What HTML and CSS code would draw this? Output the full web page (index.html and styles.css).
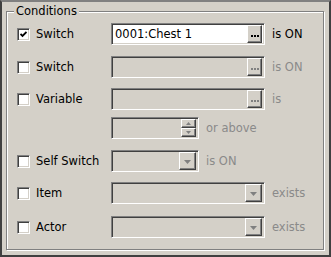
FILE: index.html
```html
<!DOCTYPE html>
<html lang="en">
  <head>
    <meta charset="UTF-8" />
    <title>Conditions</title>
    <link rel="stylesheet" href="styles.css">
  </head>
  <body>
    <div class="window">
      <div class="group">
        <span class="legend">Conditions</span>

        <div class="row">
          <span class="opt"><span class="check"><svg width="7" height="7" viewBox="0 0 7 7"><polyline points="0.5,3 2.5,5 6.5,1" fill="none" stroke="#000" stroke-width="1.8"/></svg></span>Switch</span>
          <div class="field wide on">
            <span class="value">0001:Chest 1</span>
            <span class="btn"><svg width="8" height="2" viewBox="0 0 8 2"><rect x="0" y="0" width="2" height="2"/><rect x="3" y="0" width="2" height="2"/><rect x="6" y="0" width="2" height="2"/></svg></span>
          </div>
          <span class="suffix">is ON</span>
        </div>

        <div class="row r2">
          <span class="opt"><span class="check"></span>Switch</span>
          <div class="field wide">
            <span class="btn off"><svg width="8" height="2" viewBox="0 0 8 2"><rect x="0" y="0" width="2" height="2"/><rect x="3" y="0" width="2" height="2"/><rect x="6" y="0" width="2" height="2"/></svg></span>
          </div>
          <span class="suffix off">is ON</span>
        </div>

        <div class="row">
          <span class="opt"><span class="check"></span>Variable</span>
          <div class="field wide">
            <span class="btn off"><svg width="8" height="2" viewBox="0 0 8 2"><rect x="0" y="0" width="2" height="2"/><rect x="3" y="0" width="2" height="2"/><rect x="6" y="0" width="2" height="2"/></svg></span>
          </div>
          <span class="suffix off">is</span>
        </div>

        <div class="row spinrow">
          <span class="opt"></span>
          <div class="field short">
            <span class="spin">
              <span class="sbtn"><svg width="5" height="3" viewBox="0 0 5 3"><polygon points="2.5,0 5,3 0,3"/></svg></span>
              <span class="sbtn"><svg width="5" height="3" viewBox="0 0 5 3"><polygon points="0,0 5,0 2.5,3"/></svg></span>
            </span>
          </div>
          <span class="suffix off">or above</span>
        </div>

        <div class="row r5">
          <span class="opt"><span class="check"></span>Self Switch</span>
          <div class="field short">
            <span class="btn drop"><svg width="7" height="4" viewBox="0 0 7 4"><polygon points="0,0 7,0 3.5,4"/></svg></span>
          </div>
          <span class="suffix off">is ON</span>
        </div>

        <div class="row">
          <span class="opt"><span class="check"></span>Item</span>
          <div class="field wide">
            <span class="btn drop"><svg width="7" height="4" viewBox="0 0 7 4"><polygon points="0,0 7,0 3.5,4"/></svg></span>
          </div>
          <span class="suffix off">exists</span>
        </div>

        <div class="row r7">
          <span class="opt"><span class="check"></span>Actor</span>
          <div class="field wide">
            <span class="btn drop"><svg width="7" height="4" viewBox="0 0 7 4"><polygon points="0,0 7,0 3.5,4"/></svg></span>
          </div>
          <span class="suffix off">exists</span>
        </div>
      </div>
    </div>
  </body>
</html>
```

FILE: styles.css
```css
body {
  margin: 0;
  font-family: "DejaVu Sans", Verdana, sans-serif;
  font-size: 11.5px;
  color: #000;
}
.window {
  box-sizing: border-box;
  width: 331px;
  height: 257px;
  padding: 9px 5px 0 4px;
  background-color: #d4d0c8;
  border: 2px solid #404040;
  border-top-color: #808080;
}
.group {
  position: relative;
  box-sizing: border-box;
  height: 239px;
  padding: 11px 0 0 10px;
  border: 1px solid #808080;
  box-shadow: inset 1px 1px #fff, 1px 1px #fff;
  display: flex;
  flex-direction: column;
  gap: 10px;
}
.legend {
  position: absolute;
  left: 7px;
  top: -8px;
  padding: 0 2px;
  line-height: 14px;
  background-color: #d4d0c8;
}
.row {
  display: flex;
  align-items: center;
  height: 22px;
}
.r2,
.r5 {
  margin-top: 1px;
}
.r7 {
  margin-top: 2px;
}
.spinrow {
  margin-top: -3px;
}
.opt {
  display: flex;
  align-items: center;
  width: 94px;
  flex: none;
}
.check {
  box-sizing: border-box;
  width: 13px;
  height: 13px;
  margin-right: 6px;
  display: flex;
  align-items: center;
  justify-content: center;
  background-color: #fff;
  border: 1px solid;
  border-color: #808080 #fff #fff #808080;
  box-shadow: inset 1px 1px #404040, inset -1px -1px #d4d0c8;
}
.field {
  box-sizing: border-box;
  height: 22px;
  display: flex;
  align-items: center;
  justify-content: space-between;
  padding: 2px;
  border: 1px solid;
  border-color: #808080 #fff #fff #808080;
  box-shadow: inset 1px 1px #404040, inset -1px -1px #d4d0c8;
  flex: none;
}
.field.wide {
  width: 154px;
}
.field.short {
  width: 88px;
}
.field.on {
  background-color: #fff;
}
.value {
  padding-left: 1px;
}
.btn {
  box-sizing: border-box;
  width: 15px;
  height: 18px;
  margin-left: auto;
  display: flex;
  align-items: center;
  justify-content: center;
  padding-top: 3px;
  background-color: #d4d0c8;
  border: 1px solid;
  border-color: #fff #404040 #404040 #fff;
  box-shadow: inset -1px -1px #808080;
}
.btn svg {
  fill: #000;
}
.btn.off svg {
  fill: #808080;
}
.btn.drop {
  width: 17px;
  padding-top: 1px;
}
.btn.drop svg {
  fill: #808080;
}
.spin {
  margin-left: auto;
  display: flex;
  flex-direction: column;
}
.sbtn {
  box-sizing: border-box;
  width: 15px;
  height: 9px;
  display: flex;
  align-items: center;
  justify-content: center;
  background-color: #d4d0c8;
  border: 1px solid;
  border-color: #fff #404040 #404040 #fff;
  box-shadow: inset -1px -1px #808080;
}
.sbtn svg {
  fill: #808080;
}
.suffix {
  margin-left: 7px;
}
.suffix.off {
  color: #8a8a8a;
}
```
